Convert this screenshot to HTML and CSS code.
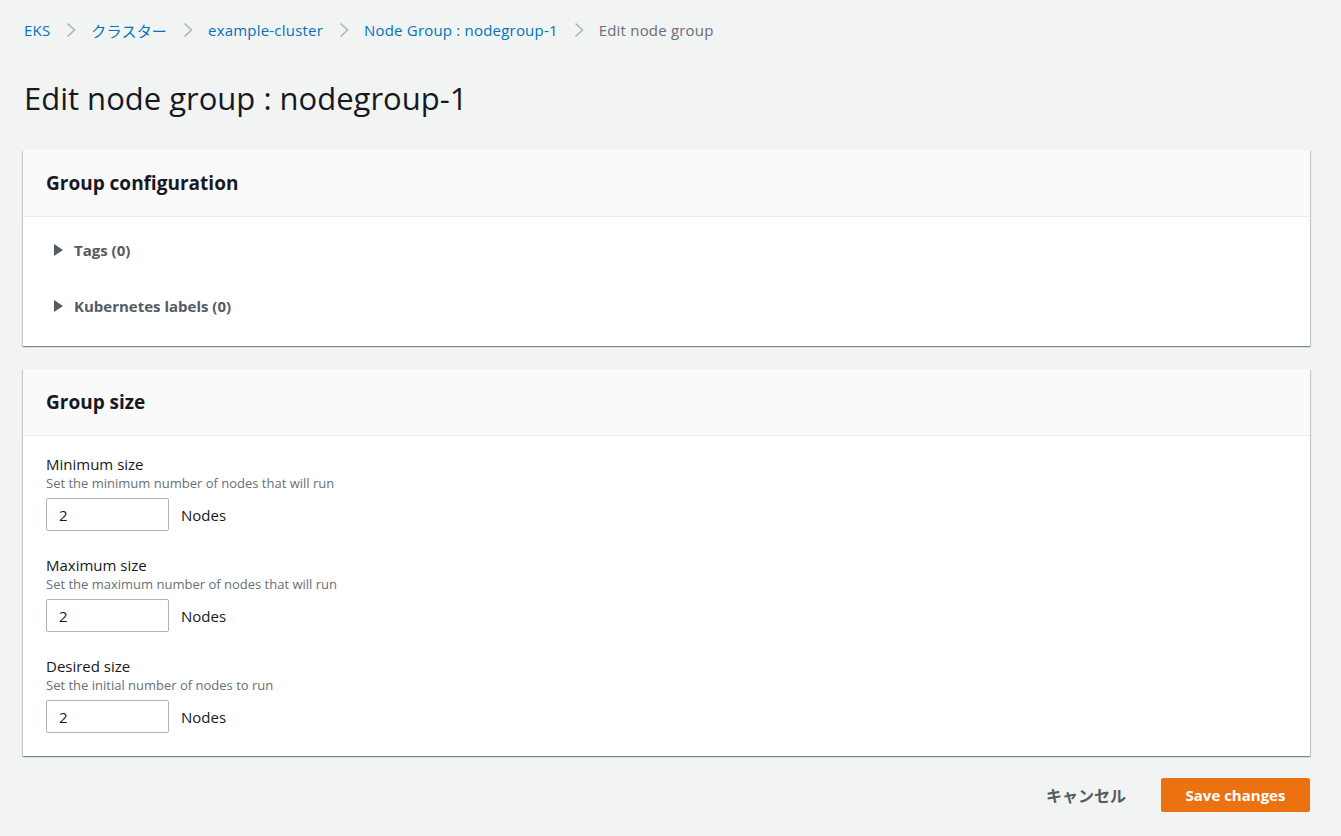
FILE: index.html
```html
<!DOCTYPE html>
<html lang="ja">
<head>
<meta charset="utf-8">
<title>Edit node group</title>
<link rel="stylesheet" href="styles.css">
</head>
<body>
<div class="page">
  <nav class="breadcrumbs">
    <a class="crumb" href="#">EKS</a>
    <span class="sep"><svg width="10" height="16" viewBox="0 0 10 16"><path d="M1.5 1.5 L8.5 8 L1.5 14.5" fill="none" stroke="#aab7b8" stroke-width="1.6"/></svg></span>
    <a class="crumb" href="#">クラスター</a>
    <span class="sep"><svg width="10" height="16" viewBox="0 0 10 16"><path d="M1.5 1.5 L8.5 8 L1.5 14.5" fill="none" stroke="#aab7b8" stroke-width="1.6"/></svg></span>
    <a class="crumb" href="#">example-cluster</a>
    <span class="sep"><svg width="10" height="16" viewBox="0 0 10 16"><path d="M1.5 1.5 L8.5 8 L1.5 14.5" fill="none" stroke="#aab7b8" stroke-width="1.6"/></svg></span>
    <a class="crumb" href="#">Node Group : nodegroup-1</a>
    <span class="sep"><svg width="10" height="16" viewBox="0 0 10 16"><path d="M1.5 1.5 L8.5 8 L1.5 14.5" fill="none" stroke="#aab7b8" stroke-width="1.6"/></svg></span>
    <span class="crumb current">Edit node group</span>
  </nav>

  <h1 class="title">Edit node group : nodegroup-1</h1>

  <section class="card">
    <div class="card-header"><h2>Group configuration</h2></div>
    <div class="card-body expanders">
      <div class="expander"><span class="caret"></span>Tags (0)</div>
      <div class="expander"><span class="caret"></span>Kubernetes labels (0)</div>
    </div>
  </section>

  <section class="card">
    <div class="card-header"><h2>Group size</h2></div>
    <div class="card-body fields">
      <div class="field">
        <div class="label">Minimum size</div>
        <div class="desc">Set the minimum number of nodes that will run</div>
        <div class="control"><input class="input" type="text" value="2"><span class="unit">Nodes</span></div>
      </div>
      <div class="field">
        <div class="label">Maximum size</div>
        <div class="desc">Set the maximum number of nodes that will run</div>
        <div class="control"><input class="input" type="text" value="2"><span class="unit">Nodes</span></div>
      </div>
      <div class="field">
        <div class="label">Desired size</div>
        <div class="desc">Set the initial number of nodes to run</div>
        <div class="control"><input class="input" type="text" value="2"><span class="unit">Nodes</span></div>
      </div>
    </div>
  </section>

  <div class="actions">
    <button class="btn-link" type="button">キャンセル</button>
    <button class="btn-primary" type="button">Save changes</button>
  </div>
</div>
</body>
</html>
```

FILE: styles.css
```css
* { box-sizing: border-box; }
html, body { margin: 0; padding: 0; }
body {
  background: #f2f3f3;
  font-family: "Open Sans", "Noto Sans CJK JP", sans-serif;
  color: #16191f;
  width: 1341px;
  height: 836px;
  overflow: hidden;
}
.page {
  padding: 19px 31px 0 23px;
}
.breadcrumbs {
  display: flex;
  align-items: center;
  height: 22px;
  font-size: 15px;
  padding-left: 1px;
}
.crumb {
  color: #0073bb;
  text-decoration: none;
  letter-spacing: 0.2px;
}
.crumb.current { color: #687078; }
.sep {
  display: inline-flex;
  margin: 0 15px 0 16px;
}
.title {
  font-size: 31px;
  font-weight: 400;
  margin: 0;
  padding: 38px 0 0 1px;
  line-height: 38px;
  color: #16191f;
}
.card {
  background: #fff;
  box-shadow: 0 1px 1px 0 rgba(0,28,36,0.3), 1px 1px 1px 0 rgba(0,28,36,0.15), -1px 1px 1px 0 rgba(0,28,36,0.15);
  margin-top: 33px;
}
.card + .card { margin-top: 23px; }
.card-header {
  background: #fafafa;
  border-bottom: 1px solid #eaeded;
  height: 67px;
  display: flex;
  align-items: center;
  padding-left: 23px;
}
.card-header h2 {
  margin: 0;
  font-size: 19px;
  font-weight: 700;
}
.expanders {
  padding: 22px 31px 29px;
  display: flex;
  flex-direction: column;
  gap: 34px;
}
.expander {
  display: flex;
  align-items: center;
  font-size: 15px;
  font-weight: 700;
  color: #545b64;
  height: 22px;
}
.caret {
  width: 0; height: 0;
  border-top: 6px solid transparent;
  border-bottom: 6px solid transparent;
  border-left: 9px solid #545b64;
  margin-right: 11px;
}
.fields {
  padding: 18px 23px 23px;
  display: flex;
  flex-direction: column;
  gap: 24px;
}
.label {
  font-size: 15px;
  line-height: 20px;
  color: #16191f;
}
.desc {
  font-size: 13px;
  line-height: 17px;
  color: #687078;
  margin-top: 1px;
}
.control {
  display: flex;
  align-items: center;
  margin-top: 6px;
}
.input {
  width: 123px;
  height: 33px;
  border: 1px solid #aab7b8;
  border-radius: 2px;
  font-family: inherit;
  font-size: 15px;
  padding: 0 12px;
  color: #16191f;
  background: #fff;
}
.unit {
  font-size: 15px;
  margin-left: 12px;
  color: #16191f;
}
.actions {
  display: flex;
  justify-content: flex-end;
  align-items: center;
  margin-top: 22px;
  gap: 20px;
}
.btn-link {
  background: none;
  border: none;
  font-family: inherit;
  font-size: 16px;
  font-weight: 700;
  color: #545b64;
  padding: 0 15px;
  height: 34px;
}
.btn-primary {
  background: #ec7211;
  border: 1px solid #ec7211;
  border-radius: 2px;
  color: #fff;
  font-family: inherit;
  font-size: 15px;
  font-weight: 700;
  height: 34px;
  width: 149px;
  padding: 0;
}
```
